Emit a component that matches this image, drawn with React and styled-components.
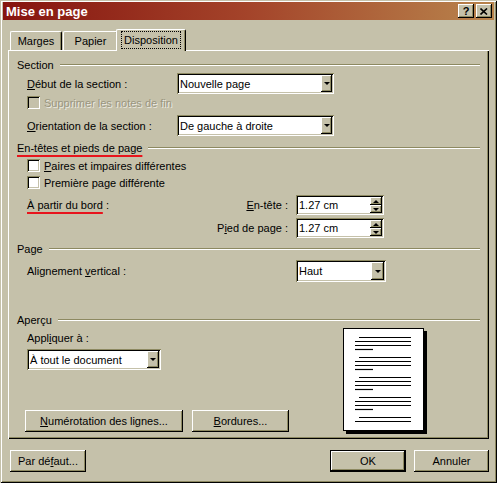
import React from "react";
import styled, { createGlobalStyle, css } from "styled-components";

const FACE = "#c5c1aa";
const SHADOW = "#8d8961";
const DARK = "#000";

const GlobalStyle = createGlobalStyle`
  html, body {
    margin: 0;
    padding: 0;
    background: ${FACE};
  }
  body {
    font-family: "Liberation Sans", Arial, sans-serif;
    font-size: 11px;
    color: #000;
  }
`;

const raised = css`
  background: ${FACE};
  box-shadow: inset -1px -1px ${DARK}, inset 1px 1px #fff,
    inset -2px -2px ${SHADOW}, inset 2px 2px ${FACE};
`;

const sunken = css`
  box-shadow: inset 1px 1px ${SHADOW}, inset -1px -1px #fff,
    inset 2px 2px ${DARK}, inset -2px -2px ${FACE};
`;

const Window = styled.div`
  width: 497px;
  height: 483px;
  box-sizing: border-box;
  padding: 2px 3px;
  background: ${FACE};
  box-shadow: inset 1px 1px ${FACE}, inset -1px -1px ${DARK},
    inset 2px 2px #fff, inset -2px -2px ${SHADOW};
  display: flex;
  flex-direction: column;
`;

const TitleBar = styled.div`
  height: 18px;
  display: flex;
  align-items: center;
  justify-content: space-between;
  padding-left: 3px;
  background: linear-gradient(to right, #86140f 0%, #a4442a 50%, #b8844c 100%);
`;

const TitleText = styled.span`
  color: #fff;
  font-weight: bold;
  font-size: 13px;
`;

const CaptionButtons = styled.div`
  display: flex;
  gap: 2px;
  margin-right: 2px;
`;

const CaptionButton = styled.div`
  ${raised};
  width: 16px;
  height: 14px;
  display: flex;
  align-items: center;
  justify-content: center;
  font-weight: bold;
  font-size: 11px;
  line-height: 14px;
`;

const Body = styled.div`
  padding: 0 5px;
  display: flex;
  flex-direction: column;
`;

const TabRow = styled.div`
  margin-top: 9px;
  height: 21px;
  display: flex;
  align-items: flex-end;
`;

const Tab = styled.div`
  position: relative;
  box-sizing: border-box;
  width: ${(p) => p.$w}px;
  margin-left: ${(p) => p.$ml}px;
  height: ${(p) => (p.$active ? 22 : 19)}px;
  margin-bottom: ${(p) => (p.$active ? -1 : 0)}px;
  z-index: ${(p) => (p.$active ? 2 : 1)};
  background: ${FACE};
  border-top: 1px solid #fff;
  border-left: 1px solid #fff;
  border-right: 1px solid ${DARK};
  border-radius: 2px 2px 0 0;
  box-shadow: inset -1px 0 ${SHADOW};
  display: flex;
  align-items: center;
  justify-content: center;
  padding-bottom: ${(p) => (p.$active ? 2 : 0)}px;
`;

const FocusText = styled.span`
  outline: 1px dotted #000;
  outline-offset: 1px;
  padding: 1px 1px;
`;

const Panel = styled.div`
  position: relative;
  box-sizing: border-box;
  width: 481px;
  height: 389px;
  padding: 8px 9px 0 9px;
  background: ${FACE};
  box-shadow: inset 1px 1px #fff, inset -1px -1px ${DARK},
    inset -2px -2px ${SHADOW};
  display: flex;
  flex-direction: column;
`;

const GroupHeader = styled.div`
  height: 14px;
  margin-top: ${(p) => p.$mt || 0}px;
  display: flex;
  align-items: center;
`;

const GroupLine = styled.div`
  flex: 1;
  margin-left: 6px;
  border-top: 1px solid ${SHADOW};
  border-bottom: 1px solid #fff;
`;

const RedMark = styled.span`
  text-decoration: underline;
  text-decoration-color: #e8141c;
  text-decoration-thickness: 2px;
  text-underline-offset: 3px;
`;

const Row = styled.div`
  display: grid;
  grid-template-columns: ${(p) => p.$cols};
  align-items: center;
  column-gap: ${(p) => p.$gap || 0}px;
  height: ${(p) => p.$h}px;
  margin-top: ${(p) => p.$mt || 0}px;
  margin-left: 10px;
  width: ${(p) => p.$w}px;
`;

const Label = styled.span`
  white-space: nowrap;
  text-align: ${(p) => (p.$right ? "right" : "left")};
  color: ${(p) => (p.$disabled ? "#9a9680" : "#000")};
  text-shadow: ${(p) => (p.$disabled ? "1px 1px rgba(255,255,255,0.7)" : "none")};
`;

const CheckRow = styled.label`
  display: flex;
  align-items: center;
  gap: 4px;
  height: 13px;
  margin-top: ${(p) => p.$mt || 0}px;
  margin-left: 10px;
`;

const CheckBox = styled.span`
  width: 13px;
  height: 13px;
  box-sizing: border-box;
  background: ${(p) => (p.$disabled ? FACE : "#fff")};
  ${sunken};
`;

const SelectBox = styled.div`
  box-sizing: border-box;
  width: ${(p) => p.$w}px;
  height: ${(p) => p.$h}px;
  margin-top: ${(p) => p.$mt || 0}px;
  margin-left: ${(p) => p.$ml || 0}px;
  padding: 2px;
  background: #fff;
  ${sunken};
  display: flex;
  align-items: stretch;
`;

const SelectValue = styled.span`
  flex: 1;
  display: flex;
  align-items: center;
  padding-left: 1px;
  white-space: nowrap;
  overflow: hidden;
`;

const ArrowButton = styled.span`
  ${raised};
  width: ${(p) => p.$w || 12}px;
  display: flex;
  align-items: center;
  justify-content: center;
`;

const ArrowDown = styled.span`
  width: 0;
  height: 0;
  border-left: 3px solid transparent;
  border-right: 3px solid transparent;
  border-top: 3px solid #000;
`;

const ArrowUp = styled.span`
  width: 0;
  height: 0;
  border-left: 3px solid transparent;
  border-right: 3px solid transparent;
  border-bottom: 3px solid #000;
`;

const SpinStack = styled.span`
  display: flex;
  flex-direction: column;
  width: 12px;
`;

const SpinHalf = styled.span`
  ${raised};
  flex: 1;
  display: flex;
  align-items: center;
  justify-content: center;
`;

const PreviewBody = styled.div`
  display: grid;
  grid-template-columns: 326px auto;
`;

const LeftColumn = styled.div`
  display: flex;
  flex-direction: column;
  padding-top: 4px;
`;

const PlainLabel = styled.div`
  height: 14px;
  line-height: 14px;
  margin-left: 10px;
`;

const ButtonRow = styled.div`
  display: flex;
  gap: ${(p) => p.$gap || 0}px;
  margin-top: ${(p) => p.$mt || 0}px;
  margin-left: ${(p) => p.$ml || 0}px;
`;

const Button = styled.div`
  box-sizing: border-box;
  width: ${(p) => p.$w}px;
  height: 22px;
  display: flex;
  align-items: center;
  justify-content: center;
  white-space: nowrap;
  ${raised};
  ${(p) =>
    p.$default &&
    css`
      border: 1px solid ${DARK};
    `}
`;

const Sheet = styled.div`
  margin-top: 1px;
  width: 81px;
  height: 103px;
  box-sizing: border-box;
  border: 1px solid #000;
  background: #fff;
  box-shadow: 3px 3px 0 #000;
`;

const Footer = styled.div`
  margin-top: 11px;
  display: flex;
  align-items: center;
`;

const Spacer = styled.div`
  flex: 1;
`;

const Select = ({ w, h = 21, mt, ml, arrow, children }) => (
  <SelectBox $w={w} $h={h} $mt={mt} $ml={ml}>
    <SelectValue>{children}</SelectValue>
    <ArrowButton $w={arrow}>
      <ArrowDown />
    </ArrowButton>
  </SelectBox>
);

const Spinner = ({ value }) => (
  <SelectBox $w={88} $h={20}>
    <SelectValue>{value}</SelectValue>
    <SpinStack>
      <SpinHalf>
        <ArrowUp />
      </SpinHalf>
      <SpinHalf>
        <ArrowDown />
      </SpinHalf>
    </SpinStack>
  </SelectBox>
);

const PageLines = () => {
  const lines = [];
  for (let g = 0; g < 5; g++) {
    const y = 8 + g * 20;
    lines.push([15, y, 67]);
    lines.push([11, y + 4, 67]);
    if (g < 4) {
      lines.push([11, y + 8, 67]);
      lines.push([11, y + 12, 29]);
    }
  }
  return (
    <svg width="79" height="101" viewBox="0 0 79 101">
      {lines.map(([x1, y, x2], i) => (
        <line
          key={i}
          x1={x1}
          y1={y + 0.5}
          x2={x2}
          y2={y + 0.5}
          stroke="#000"
          strokeWidth="1.2"
        />
      ))}
    </svg>
  );
};

export default function App() {
  return (
    <>
      <GlobalStyle />
      <Window>
        <TitleBar>
          <TitleText>Mise en page</TitleText>
          <CaptionButtons>
            <CaptionButton>?</CaptionButton>
            <CaptionButton>
              <svg width="8" height="7" viewBox="0 0 8 7">
                <path
                  d="M0.5 0.5 L7 6.5 M7 0.5 L0.5 6.5"
                  stroke="#000"
                  strokeWidth="1.6"
                />
              </svg>
            </CaptionButton>
          </CaptionButtons>
        </TitleBar>

        <Body>
          <TabRow>
            <Tab $w={52} $ml={2}>Marges</Tab>
            <Tab $w={55} $ml={1}>Papier</Tab>
            <Tab $w={70} $ml={-2} $active>
              <FocusText>Disposition</FocusText>
            </Tab>
          </TabRow>

          <Panel>
            <GroupHeader>
              <span>Section</span>
              <GroupLine />
            </GroupHeader>
            <Row $cols="150px 157px" $h={21} $mt={1} $w={307}>
              <Label>
                <u>D</u>ébut de la section :
              </Label>
              <Select w={157} arrow={11}>Nouvelle page</Select>
            </Row>
            <CheckRow $mt={2}>
              <CheckBox $disabled />
              <Label $disabled>Supprimer les notes de fin</Label>
            </CheckRow>
            <Row $cols="150px 157px" $h={21} $mt={6} $w={307}>
              <Label>
                <u>O</u>rientation de la section :
              </Label>
              <Select w={157} arrow={11}>De gauche à droite</Select>
            </Row>

            <GroupHeader $mt={5}>
              <RedMark>En-têtes et pieds de page</RedMark>
              <GroupLine />
            </GroupHeader>
            <CheckRow $mt={4}>
              <CheckBox />
              <Label>
                <u>P</u>aires et impaires différentes
              </Label>
            </CheckRow>
            <CheckRow $mt={4}>
              <CheckBox />
              <Label>Première page différente</Label>
            </CheckRow>
            <Row $cols="1fr auto 88px" $gap={8} $h={20} $mt={6} $w={357}>
              <Label>
                <RedMark>À partir du bord</RedMark> :
              </Label>
              <Label $right>
                <u>E</u>n-tête :
              </Label>
              <Spinner value="1.27 cm" />
            </Row>
            <Row $cols="1fr auto 88px" $gap={8} $h={20} $mt={3} $w={357}>
              <span />
              <Label $right>
                P<u>i</u>ed de page :
              </Label>
              <Spinner value="1.27 cm" />
            </Row>

            <GroupHeader $mt={4}>
              <span>Page</span>
              <GroupLine />
            </GroupHeader>
            <Row $cols="1fr 90px" $h={22} $mt={4} $w={359}>
              <Label>
                Alignement <u>v</u>ertical :
              </Label>
              <Select w={90} h={22} arrow={13}>
                Haut
              </Select>
            </Row>

            <GroupHeader $mt={31}>
              <span>Aperçu</span>
              <GroupLine />
            </GroupHeader>
            <PreviewBody>
              <LeftColumn>
                <PlainLabel>
                  Appl<u>i</u>quer à :
                </PlainLabel>
                <Select w={134} mt={4} ml={10} arrow={12}>
                  À tout le document
                </Select>
                <ButtonRow $gap={9} $mt={40} $ml={8}>
                  <Button $w={158}>
                    <span>
                      <u>N</u>umérotation des lignes...
                    </span>
                  </Button>
                  <Button $w={97}>
                    <span>
                      <u>B</u>ordures...
                    </span>
                  </Button>
                </ButtonRow>
              </LeftColumn>
              <Sheet>
                <PageLines />
              </Sheet>
            </PreviewBody>
          </Panel>

          <Footer>
            <ButtonRow $ml={2}>
              <Button $w={76}>
                <span>
                  Par dé<u>f</u>aut...
                </span>
              </Button>
            </ButtonRow>
            <Spacer />
            <ButtonRow $gap={8}>
              <Button $w={76} $default>
                OK
              </Button>
              <Button $w={75}>Annuler</Button>
            </ButtonRow>
          </Footer>
        </Body>
      </Window>
    </>
  );
}
